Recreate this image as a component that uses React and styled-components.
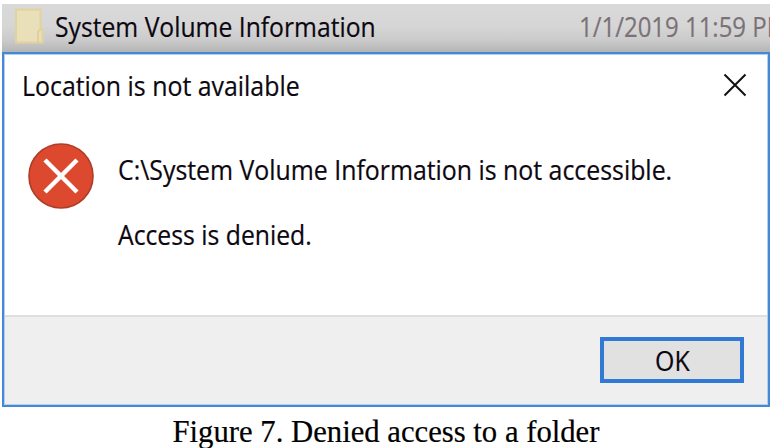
import React from 'react';
import styled, { createGlobalStyle } from 'styled-components';

const GlobalStyle = createGlobalStyle`
  * { box-sizing: border-box; }
  body { margin: 0; background: #fff; overflow: hidden; }
`;

const Figure = styled.figure`
  margin: 0;
  width: 772px;
  height: 448px;
  padding: 4px 2px 0;
  display: flex;
  flex-direction: column;
  color: #0c0710;
  font-family: "Open Sans", "Noto Sans", sans-serif;
  font-size: 26.5px;
  -webkit-text-stroke: 0.2px;
  overflow: hidden;
`;

const Label = styled.span`
  display: block;
  flex: none;
  white-space: pre;
  line-height: 36px;
  transform: scaleX(${(p) => p.$fit});
  transform-origin: ${(p) => p.$origin || 'left'} center;
`;

const FileRow = styled.div`
  flex: none;
  height: 48px;
  display: flex;
  align-items: flex-start;
  overflow: hidden;
  background: linear-gradient(#d9d9d9 0, #d6d6d6 45%, #cbcbcb 75%, #b5b5b5 100%);
`;

const FolderIcon = styled.svg`
  flex: none;
  width: 30px;
  height: 38px;
  margin: 3px 10px 0 12px;
`;

const FileName = styled.div`
  flex: none;
  width: 525px;
  padding: 5px 0 0 1px;
`;

const FileDate = styled.div`
  flex: none;
  padding-top: 5px;
  color: #7b7278;
`;

const Dialog = styled.section`
  flex: none;
  height: 355px;
  display: flex;
  flex-direction: column;
  background: #fff;
  border: 2px solid #4389d8;
  box-shadow: inset 0 0 0 1px #b5cfeb;
`;

const TitleBar = styled.header`
  height: 66px;
  display: flex;
  justify-content: space-between;
  padding: 14px 20px 0 18px;
`;

const CloseIcon = styled.svg`
  width: 26px;
  height: 26px;
  margin-top: 4px;
`;

const Message = styled.div`
  height: 195px;
  display: flex;
  padding: 21px 0 0 22px;
`;

const ErrorIcon = styled.svg`
  flex: none;
  width: 70px;
  height: 70px;
`;

const Lines = styled.div`
  display: flex;
  flex-direction: column;
  gap: 29px;
  padding: 11px 0 0 22px;
`;

const Footer = styled.footer`
  flex: 1;
  margin: 0 1px 1px;
  display: flex;
  justify-content: flex-end;
  align-items: flex-start;
  padding: 20px 23px 0 0;
  background: #efefef;
  border-top: 2px solid #dfdfdf;
`;

const Button = styled.button`
  width: 144px;
  height: 46px;
  display: flex;
  align-items: center;
  justify-content: center;
  padding: 2px 0 0;
  border: 4px solid #317ad4;
  background: #e1e1e1;
  color: inherit;
  font: inherit;
`;

const Caption = styled.figcaption`
  flex: none;
  text-align: center;
  white-space: pre;
  color: #000;
  font: 30.7px/41px "Liberation Serif", "Times New Roman", serif;
  margin-top: 5px;
`;

export default function App() {
  return (
    <Figure>
      <GlobalStyle />
      <FileRow>
        <FolderIcon viewBox="0 0 30 38" aria-hidden="true">
          <path d="M2 2.500H26.500V22.500H28.500V35.500H2Z" fill="#e9dfb9" stroke="#e2d39b" strokeWidth="2" />
          <path d="M24 35.500V24.500L26.500 22.500" fill="none" stroke="#dccd91" strokeWidth="1.500" />
        </FolderIcon>
        <FileName><Label $fit={0.932}>System Volume Information</Label></FileName>
        <FileDate><Label $fit={0.904}>1/1/2019 11:59 PM</Label></FileDate>
      </FileRow>
      <Dialog>
        <TitleBar>
          <Label $fit={0.939}>Location is not available</Label>
          <CloseIcon viewBox="0 0 26 26" aria-label="Close">
            <path d="M2.500 2.500L23.500 23.500M23.500 2.500L2.500 23.500" stroke="#111" strokeWidth="2" />
          </CloseIcon>
        </TitleBar>
        <Message>
          <ErrorIcon viewBox="0 0 70 70" aria-hidden="true">
            <circle cx="35" cy="35" r="32" fill="#dd492e" stroke="#af3c28" strokeWidth="1.600" />
            <path d="M19 19L51 51M51 19L19 51" stroke="#fff" strokeWidth="4.500" />
          </ErrorIcon>
          <Lines>
            <Label $fit={0.938}>C:\System Volume Information is not accessible.</Label>
            <Label $fit={0.934}>Access is denied.</Label>
          </Lines>
        </Message>
        <Footer>
          <Button><Label $fit={0.94} $origin="center">OK</Label></Button>
        </Footer>
      </Dialog>
      <Caption>Figure 7. Denied access to a folder</Caption>
    </Figure>
  );
}
